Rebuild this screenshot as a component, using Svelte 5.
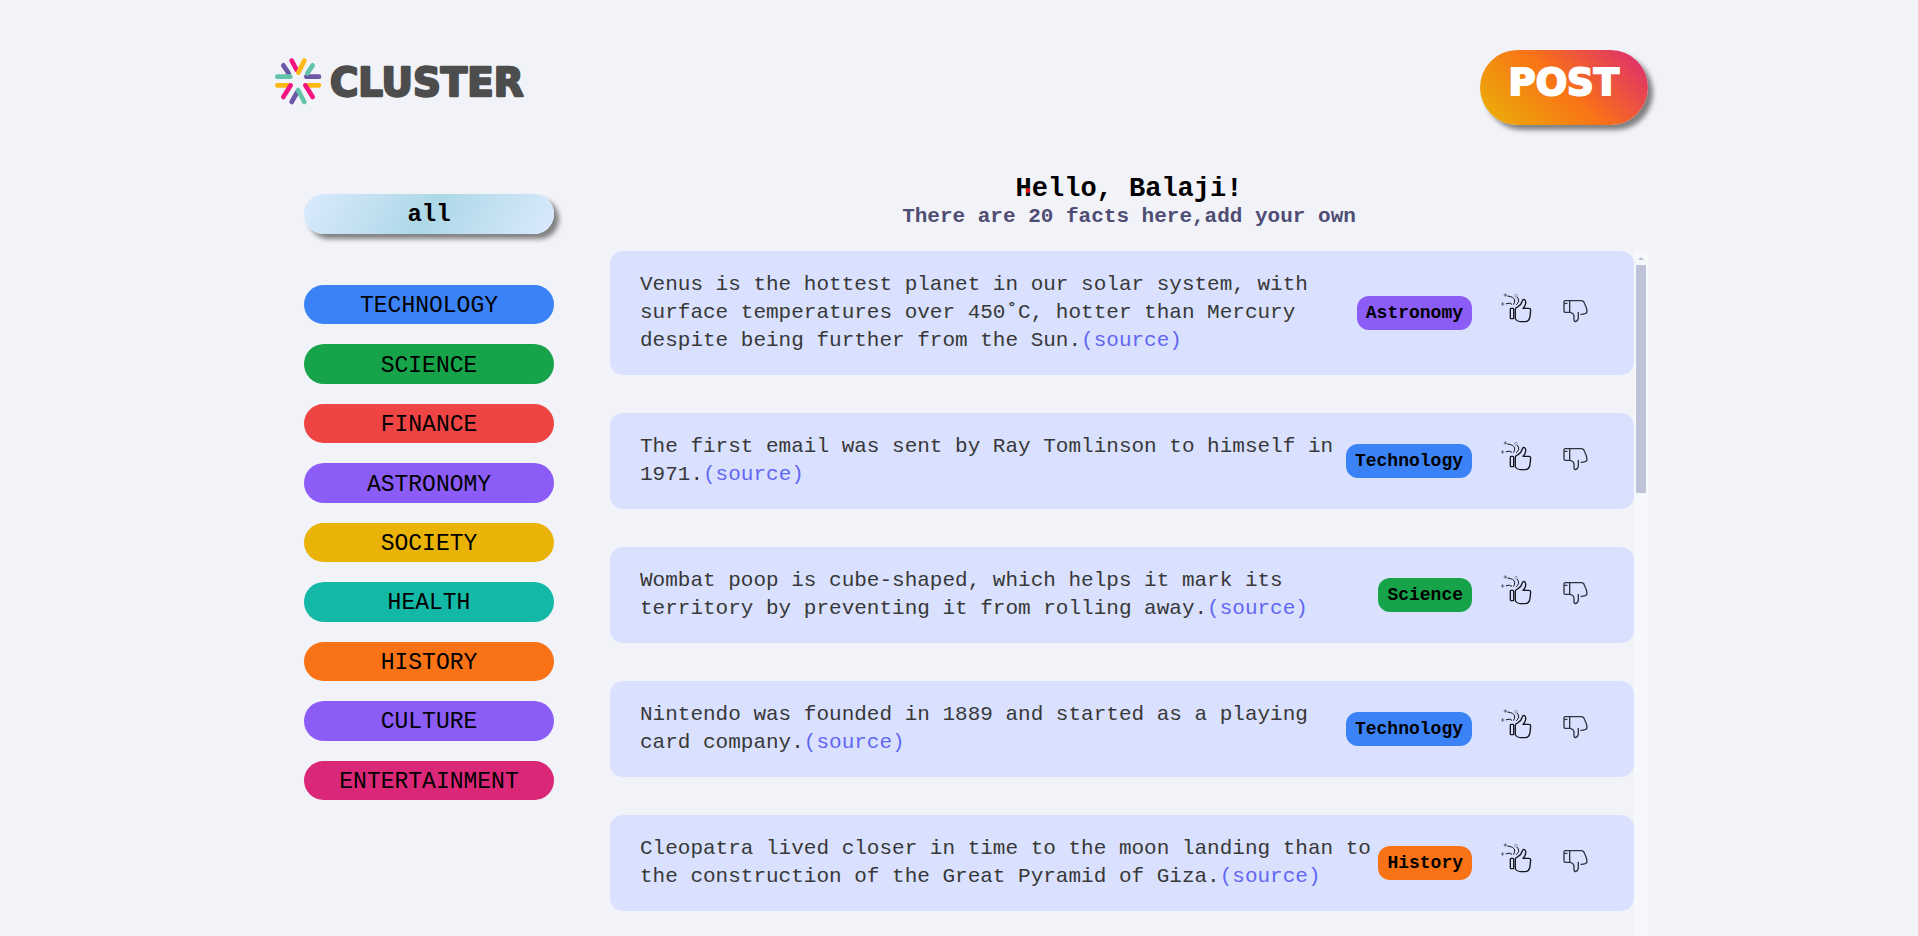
<script>
  const categories = [
    { name: 'technology', color: '#3b82f6' },
    { name: 'science', color: '#16a34a' },
    { name: 'finance', color: '#ef4444' },
    { name: 'astronomy', color: '#8b5cf6' },
    { name: 'society', color: '#eab308' },
    { name: 'health', color: '#14b8a6' },
    { name: 'history', color: '#f97316' },
    { name: 'culture', color: '#8b5cf6' },
    { name: 'entertainment', color: '#db2777' }
  ];

  const facts = [
    {
      text: 'Venus is the hottest planet in our solar system, with surface temperatures over 450˚C, hotter than Mercury despite being further from the Sun.',
      category: 'Astronomy'
    },
    { text: 'The first email was sent by Ray Tomlinson to himself in 1971.', category: 'Technology' },
    {
      text: 'Wombat poop is cube-shaped, which helps it mark its territory by preventing it from rolling away.',
      category: 'Science'
    },
    { text: 'Nintendo was founded in 1889 and started as a playing card company.', category: 'Technology' },
    {
      text: 'Cleopatra lived closer in time to the moon landing than to the construction of the Great Pyramid of Giza.',
      category: 'History'
    }
  ];

  const colorOf = (name) => categories.find((c) => c.name === name.toLowerCase()).color;
</script>

<div class="page">
  <header>
    <a class="logo" href="#home" aria-label="Cluster">
      <svg viewBox="30 45 804 156" width="268" height="52" aria-hidden="true">
        <g fill="none" stroke-width="14" stroke-linecap="round">
          <path stroke="#6b57a5" d="M70 76 86 100M139 110H177M95 186 110 159" />
          <path stroke="#62c3ab" d="M158 76 142 100M52 110H91" />
          <path stroke="#fdb813" d="M52 136H88M145 136H177" />
          <path stroke="#f5147f" d="M95 62 110 90M92 136 70 171M136 136 158 171" />
          <path stroke="#fdb813" d="M133 62 115 98" />
          <path stroke="#62c3ab" d="M114 150 133 186" />
        </g>
        <text class="wordmark" x="210" y="168">CLUSTER</text>
      </svg>
    </a>
    <button class="post">POST</button>
  </header>

  <main>
    <aside>
      <button class="all">all</button>
      <div class="categories">
        {#each categories as c}
          <button class="category" style="background:{c.color}">{c.name}</button>
        {/each}
      </div>
    </aside>

    <section>
      <h1><span class="initial">H</span>ello, Balaji!</h1>
      <h2>There are 20 facts here,add your own</h2>

      <div class="feed">
        <ul>
          {#each facts as f}
            <li>
              <p>{f.text}<a href="#source">(source)</a></p>
              <span class="badge" style="background:{colorOf(f.category)}">{f.category}</span>
              <div class="votes">
                <button aria-label="Like">
                  <svg viewBox="30 36 96 102" width="32" height="34">
                    <g fill="none" stroke="#15171c" stroke-width="4" stroke-linecap="round" stroke-linejoin="round">
                      <path d="M63 85h6q2 0 2 3v25q0 3-2 3h-6q-2 0-2-3V88q0-3 2-3z" />
                      <path d="M99 85H117Q122 85 122 90L120 109Q118 125 105 125H90Q81 125 76 117V88Q76 83 84 80Q94 74 97 63Q99 57 104 59Q108 62 107 70Q106 78 99 85" />
                      <path stroke-width="3" d="M53 48Q71 50 74 60Q75 67 71 73M49 71Q59 67 65 72" />
                      <path stroke-width="3" d="M82 52Q87 57 86 64Q84 70 79 74" />
                    </g>
                    <g fill="none" stroke="#596071" stroke-width="3">
                      <path d="M46 40v10M41 45h10M38 67v10M33 72h10" />
                      <circle cx="78" cy="47" r="4" opacity=".5" />
                    </g>
                  </svg>
                </button>
                <button aria-label="Dislike">
                  <svg viewBox="216 36 81 102" width="27" height="34">
                    <g fill="none" stroke="#30343f" stroke-width="4" stroke-linecap="round" stroke-linejoin="round">
                      <path d="M239 63V97H226Q222 97 222 93V66Q222 62 226 62H274Q281 62 283 69Q291 84 291 96Q288 103 273 103" />
                      <path d="M239 97Q250 98 252 108V120Q253 125 257 125Q264 121 265 115V97M224 70H231" />
                    </g>
                  </svg>
                </button>
              </div>
            </li>
          {/each}
        </ul>
        <div class="scrollbar" aria-hidden="true">
          <svg viewBox="0 0 6 3" width="6" height="3"><path d="M3 0 6 3H0z" fill="#bec3da" /></svg>
          <div class="thumb"></div>
        </div>
      </div>
    </section>
  </main>
</div>

<style>
  :global(body) {
    margin: 0;
    background: #f2f3f9;
  }
  .page {
    box-sizing: border-box;
    display: flex;
    flex-direction: column;
    height: 100vh;
    max-width: 1378px;
    margin: 0 auto;
    padding-top: 50px;
    overflow: clip;
    overflow-clip-margin: 16px;
    font-family: 'Liberation Mono', monospace;
    color: #000;
  }
  button {
    border: 0;
    padding: 0;
    background: none;
    font: inherit;
    color: inherit;
    cursor: pointer;
  }
  svg {
    display: block;
  }
  header {
    display: flex;
    justify-content: space-between;
    align-items: flex-start;
  }
  .logo {
    margin-top: 5px;
  }
  .wordmark {
    font: 700 116px 'DejaVu Sans', sans-serif;
    fill: #4d4d4d;
    stroke: #4d4d4d;
    stroke-width: 7px;
    stroke-linejoin: round;
  }
  .post {
    padding: 10px 29px 19px;
    border-radius: 38px;
    background: linear-gradient(45deg, #eab308, #f97316, #db2777);
    box-shadow: 5px 5px 5px gray;
    font: 700 37px/46px 'DejaVu Sans', sans-serif;
    -webkit-text-stroke: 2px #fff;
    color: #fff;
  }
  main {
    flex: 1;
    min-height: 0;
    display: grid;
    grid-template-columns: 250px minmax(0, 1fr);
    grid-template-rows: minmax(0, 1fr);
    gap: 56px;
    margin-top: 49px;
    padding-left: 34px;
  }
  aside {
    display: flex;
    flex-direction: column;
    gap: 51px;
    padding-top: 20px;
  }
  .all {
    padding-top: 2px;
    border-radius: 20px;
    background: linear-gradient(120deg, #dbeafe, lightblue, #dbeafe);
    box-shadow: 5px 5px 5px gray;
    font-size: 24px;
    font-weight: 700;
    line-height: 38px;
  }
  .categories {
    display: grid;
    grid-auto-rows: 1fr;
    gap: 20px;
    min-height: 515px;
  }
  .category {
    padding-top: 3px;
    border-radius: 20px;
    font-size: 23px;
    line-height: 36px;
    text-transform: uppercase;
  }
  section {
    display: flex;
    flex-direction: column;
    min-height: 0;
    padding-top: 1px;
  }
  h1,
  h2 {
    margin: 0;
    line-height: 28px;
    text-align: center;
  }
  h1 {
    font-size: 27px;
  }
  h2 {
    font-size: 21px;
    color: #4f4d73;
  }
  .initial {
    position: relative;
  }
  .initial::after {
    content: '';
    position: absolute;
    left: 10px;
    top: 14px;
    width: 4px;
    height: 5px;
    border-radius: 2px;
    background: #f01818;
  }
  .feed {
    flex: 1;
    min-height: 0;
    display: flex;
    margin-top: 20px;
  }
  ul {
    flex: 1;
    display: flex;
    flex-direction: column;
    gap: 38px;
    margin: 0;
    padding: 0;
    list-style: none;
    overflow-y: auto;
    scrollbar-width: none;
  }
  li {
    flex: none;
    display: flex;
    align-items: center;
    padding: 20px 45px 20px 30px;
    border-radius: 13px;
    background: #d9e1ff;
  }
  p {
    flex: 1;
    margin: 0 5px 0 0;
    font-size: 21px;
    line-height: 28px;
    color: #383838;
  }
  p a {
    color: #6366f1;
    text-decoration: none;
  }
  .badge {
    padding: 0 9px;
    border-radius: 12px;
    font-size: 18px;
    font-weight: 700;
    line-height: 34px;
  }
  .votes {
    display: flex;
    gap: 30px;
    margin-left: 28px;
    padding-bottom: 8px;
  }
  .scrollbar {
    display: flex;
    flex-direction: column;
    align-items: center;
    gap: 5px;
    width: 14px;
    padding-top: 6px;
    background: #f7f8fc;
  }
  .thumb {
    width: 10px;
    height: 228px;
    background: #bec3da;
  }
</style>
